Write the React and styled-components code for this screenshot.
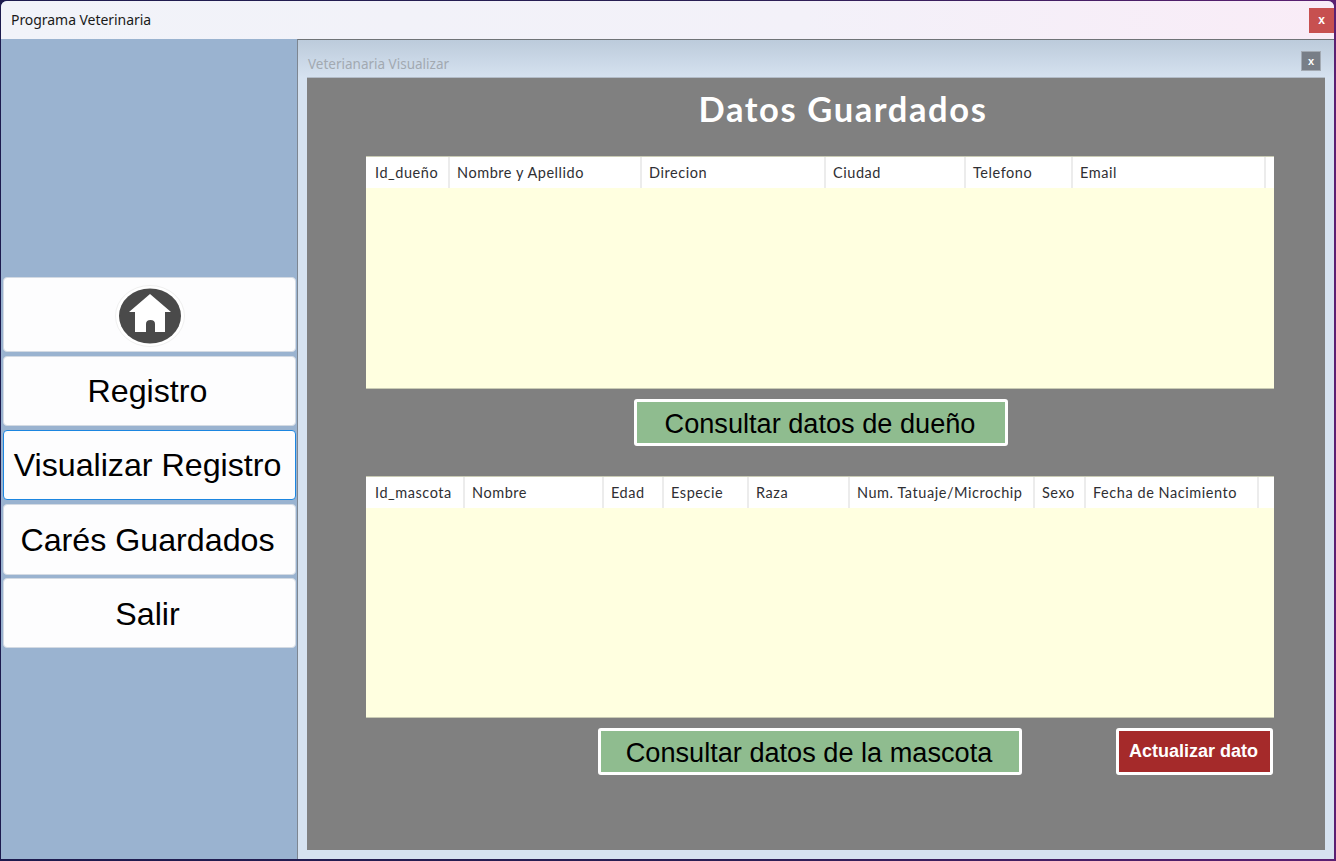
import React from "react";
import styled, { createGlobalStyle } from "styled-components";

const Global = createGlobalStyle`
  html, body { margin: 0; padding: 0; height: 100%; overflow: hidden; }
  body { background: linear-gradient(90deg, #1d1b4e 0%, #2a1f55 55%, #5b1f72 100%); }
  * { box-sizing: border-box; }
`;

const Window = styled.div`
  width: 1333px;
  height: 858px;
  margin: 1px 0 0 1px;
  display: flex;
  flex-direction: column;
  border-radius: 6px 6px 0 0;
  overflow: hidden;
  background: #9ab3d0;
`;
const TitleBar = styled.header`
  height: 38px;
  flex: none;
  display: flex;
  align-items: center;
  justify-content: space-between;
  padding: 0 0 0 10px;
  background: linear-gradient(90deg, #f1f3f9 0%, #f3f1f9 60%, #f9ecf7 100%);
`;
const WindowTitle = styled.span`
  font: 14px/20px "Noto Sans", sans-serif;
  color: #1a1a1a;
  letter-spacing: -0.05px;
`;
const CloseBtn = styled.button`
  width: 25px;
  height: 25px;
  margin: 0;
  padding: 0;
  border: none;
  background: #c75050;
  color: #fff;
  font: bold 12px/23px "Liberation Sans", sans-serif;
  text-align: center;
`;
const Body = styled.div`
  flex: 1;
  display: flex;
  min-height: 0;
`;
const Sidebar = styled.nav`
  width: 296px;
  flex: none;
  padding: 238px 1px 0 2px;
  display: flex;
  flex-direction: column;
  background: #9ab3d0;
`;
const NavButton = styled.button`
  height: ${(p) => p.$h}px;
  margin-bottom: ${(p) => p.$gap}px;
  display: flex;
  align-items: center;
  justify-content: center;
  padding: ${(p) => (p.$low ? 2 : 0)}px ${(p) => (p.$icon ? 0 : 4)}px 0 0;
  background: #fdfdfe;
  border: 1px solid ${(p) => (p.$active ? "#1c86e0" : "#d3dae3")};
  border-radius: 4px;
  color: #000;
  font: 32.2px/1 "Liberation Sans", sans-serif;
`;
const Child = styled.section`
  flex: 1;
  display: flex;
  flex-direction: column;
  padding: 0 9px 9px 9px;
  border-top: 1px solid #6f7377;
  border-left: 1px solid #7d8691;
  background: linear-gradient(180deg, #bccbdb 0px, #d6e2f0 38px, #d6e2f0 100%);
`;
const ChildBar = styled.div`
  height: 37px;
  flex: none;
  display: flex;
  align-items: flex-end;
  justify-content: space-between;
  padding: 0 4px 6px 1px;
`;
const ChildTitle = styled.span`
  font: 13.5px/18px "Noto Sans", sans-serif;
  color: #a2a9b1;
  margin-bottom: -2px;
`;
const ChildClose = styled.button`
  width: 20px;
  height: 20px;
  padding: 0;
  border: 1px solid #a3aab3;
  background: #787e87;
  color: #fff;
  font: bold 11px/16px "Liberation Sans", sans-serif;
  text-align: center;
`;
const Content = styled.main`
  flex: 1;
  background: #808080;
  border-top: 1px solid #b3bcc8;
  padding: 0 51px 0 59px;
  display: flex;
  flex-direction: column;
`;
const Heading = styled.h1`
  margin: 12px 0 0;
  height: 66px;
  padding-left: 46px;
  text-align: center;
  font: bold 34.5px/38px Lato, sans-serif;
  letter-spacing: 1.6px;
  color: #fff;
`;
const Table = styled.div`
  width: 908px;
  height: ${(p) => p.$h}px;
  flex: none;
  background: #ffffe0;
  border-top: 1px solid #c9cbb4;
  border-bottom: 1px solid #c9cbb4;
`;
const HeaderRow = styled.div`
  display: flex;
  height: 31px;
  background: #fff;
  padding-left: 1px;
`;
const HeaderCell = styled.div`
  width: ${(p) => p.$w}px;
  flex: none;
  padding-left: 7px;
  border-right: 2px solid #ececec;
  font: 14.5px/31px Lato, sans-serif;
  letter-spacing: 0.55px;
  color: #2f2f33;
  white-space: nowrap;
  overflow: hidden;
  &:first-child { padding-left: 8px; }
`;
const Actions = styled.div`
  display: flex;
  margin-top: 10px;
  height: 48px;
  margin-bottom: ${(p) => p.$after}px;
  padding-left: ${(p) => p.$indent}px;
`;
const ActionButton = styled.button`
  width: ${(p) => p.$w}px;
  height: 47px;
  padding: ${(p) => (p.$danger ? "0 2px 0 0" : "2px 2px 0 0")};
  border: 3px solid #fff;
  border-radius: 3px;
  background: ${(p) => (p.$danger ? "#a52a2a" : "#8fbc8f")};
  color: ${(p) => (p.$danger ? "#fff" : "#000")};
  font: ${(p) => (p.$danger ? "bold 18px" : "27.15px")} "Liberation Sans", sans-serif;
  margin-right: ${(p) => p.$mr || 0}px;
`;
const HomeGlyph = styled.svg`
  display: block;
  margin-top: 2px;
`;

const HomeIcon = () => (
  <HomeGlyph width="70" height="62" viewBox="0 0 70 62">
    <ellipse cx="35" cy="31" rx="34.5" ry="30.5" fill="#fff" stroke="#f0f0f0" strokeWidth="1" />
    <ellipse cx="35" cy="31" rx="31" ry="27.5" fill="#4a4a4a" />
    <path
      d="M35 9 L56 27 L50 27 L50 47 L40 47 L40 39 Q40 35 35.5 35 Q31 35 31 39 L31 47 L20 47 L20 27 L14 27 Z"
      fill="#fff"
    />
  </HomeGlyph>
);

const ownerCols = [
  ["Id_dueño", 83],
  ["Nombre y Apellido", 192],
  ["Direcion", 184],
  ["Ciudad", 140],
  ["Telefono", 107],
  ["Email", 193],
];
const petCols = [
  ["Id_mascota", 98],
  ["Nombre", 139],
  ["Edad", 60],
  ["Especie", 85],
  ["Raza", 101],
  ["Num. Tatuaje/Microchip", 185],
  ["Sexo", 51],
  ["Fecha de Nacimiento", 173],
];

const DataTable = ({ cols, h }) => (
  <Table $h={h}>
    <HeaderRow>
      {cols.map(([label, w]) => (
        <HeaderCell key={label} $w={w}>{label}</HeaderCell>
      ))}
    </HeaderRow>
  </Table>
);

export default function App() {
  return (
    <>
      <Global />
      <Window>
        <TitleBar>
          <WindowTitle>Programa Veterinaria</WindowTitle>
          <CloseBtn>x</CloseBtn>
        </TitleBar>
        <Body>
          <Sidebar>
            <NavButton $h={75} $gap={4} $icon><HomeIcon /></NavButton>
            <NavButton $h={70} $gap={4}>Registro</NavButton>
            <NavButton $h={70} $gap={4} $active>Visualizar Registro</NavButton>
            <NavButton $h={71} $gap={3} $low>Carés Guardados</NavButton>
            <NavButton $h={70} $gap={0} $low>Salir</NavButton>
          </Sidebar>
          <Child>
            <ChildBar>
              <ChildTitle>Veterianaria Visualizar</ChildTitle>
              <ChildClose>x</ChildClose>
            </ChildBar>
            <Content>
              <Heading>Datos Guardados</Heading>
              <DataTable cols={ownerCols} h={233} />
              <Actions $indent={268} $after={29}>
                <ActionButton $w={374}>Consultar datos de dueño</ActionButton>
              </Actions>
              <DataTable cols={petCols} h={242} />
              <Actions $indent={232} $after={0}>
                <ActionButton $w={424} $mr={94}>Consultar datos de la mascota</ActionButton>
                <ActionButton $w={157} $danger>Actualizar dato</ActionButton>
              </Actions>
            </Content>
          </Child>
        </Body>
      </Window>
    </>
  );
}
